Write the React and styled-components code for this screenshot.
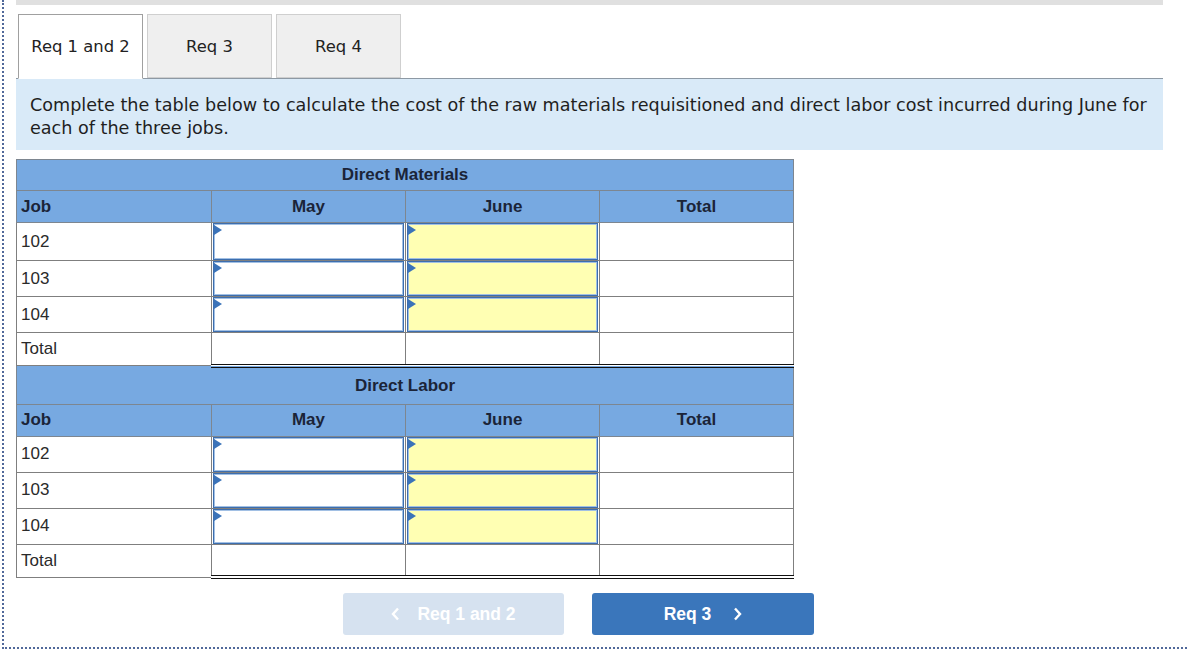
import React from "react";
import styled, { createGlobalStyle } from "styled-components";

const Global = createGlobalStyle`
  html, body { margin: 0; padding: 0; background: #fff; overflow: hidden; }
  body { font-family: "Liberation Sans", Arial, sans-serif; }
`;

const Frame = styled.div`
  margin-left: 2px;
  width: 1210px;
  height: 647px;
  border-left: 2px dotted #50689a;
  border-bottom: 2px dotted #50689a;
  padding-left: 12px;
  box-sizing: content-box;
`;

const Inner = styled.div`
  width: 1147px;
`;

const TopBar = styled.div`
  height: 5px;
  background: #e0e0e0;
`;

const Tabs = styled.div`
  display: flex;
  gap: 4px;
  margin-top: 9px;
  padding-left: 2px;
  position: relative;
  z-index: 1;
`;

const Tab = styled.div`
  width: 125px;
  box-sizing: border-box;
  display: flex;
  align-items: center;
  justify-content: center;
  font-family: "DejaVu Sans", Verdana, sans-serif;
  font-size: 16.4px;
  color: #222;
  background: ${p => (p.$active ? "#fff" : "#efefef")};
  border: 1px solid ${p => (p.$active ? "#a0a0a0" : "#cfcfcf")};
  border-bottom: ${p => (p.$active ? "1px solid #fff" : "1px solid #cfcfcf")};
  margin-bottom: ${p => (p.$active ? "-1px" : "0")};
  height: ${p => (p.$active ? "65px" : "64px")};
  padding-bottom: ${p => (p.$active ? "1px" : "0")};
`;

const Instructions = styled.div`
  background: #d9eaf8;
  border-top: 1px solid #8d99a4;
  padding: 15px 14px 10px 14px;
  font-family: "DejaVu Sans", Verdana, sans-serif;
  font-size: 17.6px;
  line-height: 23px;
  color: #1f1f1f;
`;

const Table = styled.table`
  margin-top: 9px;
  border-collapse: collapse;
  width: 777px;
  table-layout: fixed;
  font-size: 17px;
  color: #2a2a2a;
`;

const Col = styled.col`
  width: ${p => p.$w}px;
`;

const GroupHead = styled.th`
  background: #77a9e1;
  border: 1px solid #7d8690;
  height: ${p => p.$h}px;
  padding: 0;
  font-weight: bold;
  color: #1b2438;
  text-align: center;
  vertical-align: middle;
`;

const ColHead = styled.th`
  background: #77a9e1;
  border: 1px solid #7d8690;
  height: 31px;
  padding: 0 4px;
  font-weight: bold;
  color: #1b2438;
  text-align: ${p => (p.$left ? "left" : "center")};
  vertical-align: middle;
`;

const Row = styled.tr`
  height: ${p => p.$h}px;
`;

const LabelCell = styled.td`
  border: 1px solid #7f7f7f;
  padding: 0 4px;
  vertical-align: middle;
`;

const InputCell = styled.td`
  border: 1px solid #7f7f7f;
  padding: 0;
`;

const PlainCell = styled.td`
  border: 1px solid #7f7f7f;
  padding: 0;
`;

const TotalCell = styled.td`
  border-left: 1px solid #7f7f7f;
  border-right: 1px solid #7f7f7f;
  border-top: 1px solid #111;
  border-bottom: 4px double #111;
  padding: 0;
`;

const InputBox = styled.div`
  position: relative;
  box-sizing: border-box;
  height: ${p => p.$h}px;
  margin: 0 1px 0 1px;
  background: ${p => (p.$yellow ? "#ffffb3" : "#fff")};
  border: 1px solid #3d6eae;
  box-shadow: inset 0 0 0 1px #a2c0e4;
  &::before {
    content: "";
    position: absolute;
    left: 0;
    top: 1px;
    border-top: 5px solid transparent;
    border-bottom: 5px solid transparent;
    border-left: 8px solid #3b73b9;
  }
`;

const ButtonRow = styled.div`
  display: flex;
  justify-content: center;
  gap: 28px;
  margin-top: 14px;
  padding-right: 22px;
`;

const NavButton = styled.button`
  width: ${p => p.$w}px;
  height: 42px;
  border: none;
  border-radius: 3px;
  background: ${p => (p.$disabled ? "#d6e2f0" : "#3a76bb")};
  color: #fff;
  font-family: "Liberation Sans", Arial, sans-serif;
  font-weight: bold;
  font-size: 17.5px;
  display: flex;
  align-items: center;
  justify-content: center;
  gap: ${p => p.$gap}px;
  padding: 0;
  cursor: pointer;
`;

const Chevron = ({ dir }) => (
  <svg width="9" height="14" viewBox="0 0 9 14" aria-hidden="true">
    <path
      d={dir === "left" ? "M7 1.5 L2 7 L7 12.5" : "M2 1.5 L7 7 L2 12.5"}
      fill="none"
      stroke="currentColor"
      strokeWidth="2.4"
    />
  </svg>
);

function Section({ title, headH, rows }) {
  const jobs = ["102", "103", "104"];
  return (
    <>
      <tr>
        <GroupHead colSpan={4} $h={headH}>{title}</GroupHead>
      </tr>
      <tr>
        <ColHead $left>Job</ColHead>
        <ColHead>May</ColHead>
        <ColHead>June</ColHead>
        <ColHead>Total</ColHead>
      </tr>
      {jobs.map((j, i) => {
        const h = rows[i];
        return (
          <Row key={j} $h={h}>
            <LabelCell>{j}</LabelCell>
            <InputCell>
              <InputBox $h={h} />
            </InputCell>
            <InputCell>
              <InputBox $h={h} $yellow />
            </InputCell>
            <PlainCell />
          </Row>
        );
      })}
      <Row $h={33}>
        <LabelCell>Total</LabelCell>
        <TotalCell />
        <TotalCell />
        <TotalCell />
      </Row>
    </>
  );
}

export default function App() {
  return (
    <>
      <Global />
      <Frame>
        <Inner>
          <TopBar />
          <Tabs>
            <Tab $active>Req 1 and 2</Tab>
            <Tab>Req 3</Tab>
            <Tab>Req 4</Tab>
          </Tabs>
          <Instructions>
            Complete the table below to calculate the cost of the raw materials
            requisitioned and direct labor cost incurred during June for each of
            the three jobs.
          </Instructions>
          <Table>
            <colgroup>
              <Col $w={195} />
              <Col $w={194} />
              <Col $w={194} />
              <Col $w={194} />
            </colgroup>
            <tbody>
              <Section title="Direct Materials" headH={30} rows={[37, 35, 35]} />
              <Section title="Direct Labor" headH={36} rows={[35, 35, 35]} />
            </tbody>
          </Table>
          <ButtonRow>
            <NavButton $w={221} $disabled $gap={17}>
              <Chevron dir="left" />
              Req 1 and 2
            </NavButton>
            <NavButton $w={222} $gap={22}>
              Req 3
              <Chevron dir="right" />
            </NavButton>
          </ButtonRow>
        </Inner>
      </Frame>
    </>
  );
}
